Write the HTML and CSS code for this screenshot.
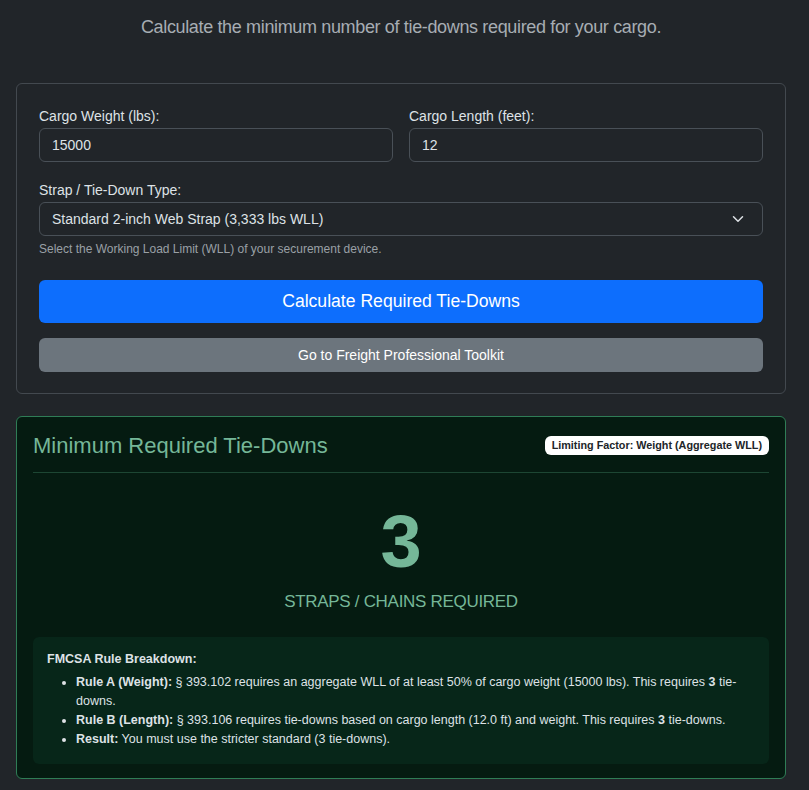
FILE: index.html
```html
<!DOCTYPE html>
<html lang="en">
<head>
<meta charset="utf-8">
<title>Tie-Down Calculator</title>
<link rel="stylesheet" href="styles.css">
</head>
<body>
<div class="container">
  <p class="lead">Calculate the minimum number of tie-downs required for your cargo.</p>

  <div class="card form-card">
    <div class="row">
      <div class="field">
        <label class="label">Cargo Weight (lbs):</label>
        <div class="input">15000</div>
      </div>
      <div class="field">
        <label class="label">Cargo Length (feet):</label>
        <div class="input">12</div>
      </div>
    </div>
    <div class="field">
      <label class="label">Strap / Tie-Down Type:</label>
      <div class="input select">
        <span>Standard 2-inch Web Strap (3,333 lbs WLL)</span>
        <svg class="chev" width="12" height="12" viewBox="0 0 16 16"><path d="M2 5l6 6 6-6" fill="none" stroke="#dee2e6" stroke-width="2" stroke-linecap="round" stroke-linejoin="round"/></svg>
      </div>
      <div class="help">Select the Working Load Limit (WLL) of your securement device.</div>
    </div>
    <button class="btn btn-primary">Calculate Required Tie-Downs</button>
    <button class="btn btn-secondary">Go to Freight Professional Toolkit</button>
  </div>

  <div class="card result-card">
    <div class="result-head">
      <h4 class="result-title">Minimum Required Tie-Downs</h4>
      <span class="badge">Limiting Factor: Weight (Aggregate WLL)</span>
    </div>
    <hr class="divider">
    <div class="big-num">3</div>
    <div class="big-label">STRAPS / CHAINS REQUIRED</div>
    <div class="breakdown">
      <div class="bd-title">FMCSA Rule Breakdown:</div>
      <ul class="bd-list">
        <li><strong>Rule A (Weight):</strong> § 393.102 requires an aggregate WLL of at least 50% of cargo weight (15000 lbs). This requires <strong>3</strong> tie-downs.</li>
        <li><strong>Rule B (Length):</strong> § 393.106 requires tie-downs based on cargo length (12.0 ft) and weight. This requires <strong>3</strong> tie-downs.</li>
        <li><strong>Result:</strong> You must use the stricter standard (3 tie-downs).</li>
      </ul>
    </div>
  </div>
</div>
</body>
</html>
```

FILE: styles.css
```css
* { box-sizing: border-box; }
html, body { margin: 0; padding: 0; }
body {
  background: #212529;
  color: #dee2e6;
  font-family: "Liberation Sans", Arial, sans-serif;
  font-size: 14px;
}
.container {
  width: 770px;
  margin-left: 16px;
  padding-top: 12px;
  padding-bottom: 12px;
}
.lead {
  margin: 0 0 41px 0;
  text-align: center;
  font-size: 18px;
  letter-spacing: -0.35px;
  line-height: 30px;
  font-weight: 300;
  color: #a7adb3;
}
.card {
  border-radius: 6px;
}
.form-card {
  border: 1px solid #43494f;
  padding: 22px 22px 21px 22px;
}
.row {
  display: grid;
  grid-template-columns: 1fr 1fr;
  gap: 16px;
  margin-bottom: 18px;
}
.label {
  display: block;
  line-height: 20px;
  margin-bottom: 2px;
  font-size: 14px;
  color: #dee2e6;
}
.input {
  height: 34px;
  border: 1px solid #495057;
  border-radius: 6px;
  background: #212529;
  padding: 0 12px;
  display: flex;
  align-items: center;
  font-size: 14px;
  color: #dee2e6;
}
.select {
  justify-content: space-between;
}
.chev { margin-right: 6px; }
.help {
  margin-top: 4px;
  font-size: 12px;
  line-height: 18px;
  color: #9aa0a6;
}
.btn {
  display: block;
  width: 100%;
  border: 0;
  border-radius: 6px;
  font-family: inherit;
  color: #fff;
  text-align: center;
}
.btn-primary {
  margin-top: 22px;
  height: 43px;
  background: #0d6efd;
  font-size: 17.6px;
}
.btn-secondary {
  margin-top: 15px;
  height: 34px;
  background: #6c757d;
  font-size: 14px;
}
.result-card {
  margin-top: 22px;
  background: #051b11;
  border: 1px solid #2f7d56;
  padding: 16px 16px 14px 16px;
}
.result-head {
  display: flex;
  justify-content: space-between;
  align-items: center;
  height: 25px;
}
.result-title {
  margin: 0;
  font-size: 22px;
  font-weight: 500;
  line-height: 25px;
  color: #75b798;
}
.badge {
  background: #fff;
  color: #212529;
  font-size: 10.8px;
  font-weight: 700;
  padding: 3px 7px;
  border-radius: 6px;
  line-height: 13px;
}
.divider {
  margin: 14px 0 0 0;
  border: 0;
  border-top: 1px solid #1d4633;
}
.big-num {
  margin-top: 29px;
  text-align: center;
  font-size: 74px;
  font-weight: 700;
  line-height: 80px;
  color: #75b798;
}
.big-label {
  margin-top: 9px;
  text-align: center;
  font-size: 17px;
  letter-spacing: -0.3px;
  line-height: 22px;
  color: #75b798;
}
.breakdown {
  margin-top: 24px;
  background: #072619;
  border-radius: 6px;
  padding: 13px 14px 15px 14px;
  font-size: 12.5px;
  line-height: 19px;
  color: #dee2e6;
}
.bd-title {
  font-weight: 700;
  margin-bottom: 4px;
}
.bd-list {
  margin: 0;
  padding-left: 29px;
}
```
